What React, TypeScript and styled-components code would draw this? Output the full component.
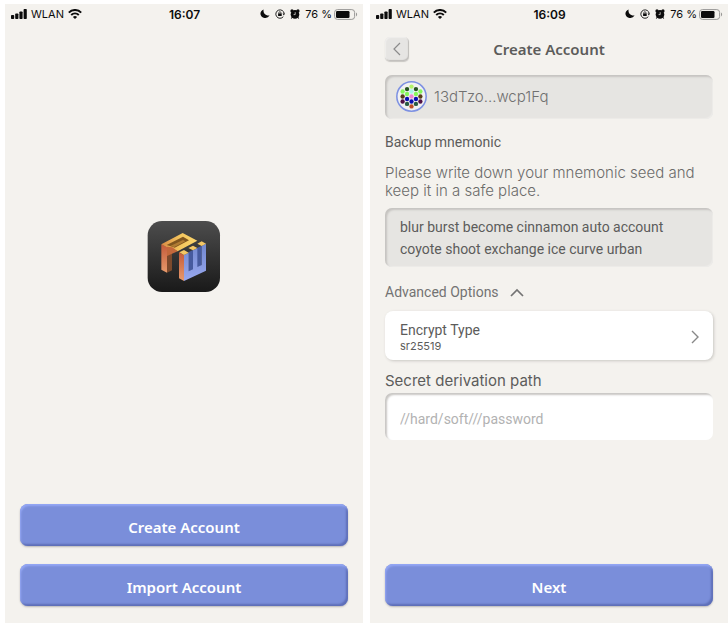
import React from "react";
import styled, { createGlobalStyle } from "styled-components";

const GlobalStyle = createGlobalStyle`
  *, *::before, *::after { box-sizing: border-box; }
  body { margin: 0; background: #fff; color: #5c5c5b; font-family: Roboto, "Noto Sans", sans-serif; }
  button, input { font: inherit; color: inherit; border: 0; margin: 0; }
  h1, h2, p { margin: 0; font-weight: 400; }
  svg { display: block; flex: none; }
`;

const Screens = styled.main`
  display: grid;
  grid-template-columns: 1fr 1fr;
  gap: 7px;
  min-height: 100vh;
  padding: 4px 0 17px 5px;
`;

const Phone = styled.section`
  display: flex;
  flex-direction: column;
  min-width: 0;
  background: #f4f2ee;
`;

const StatusBar = styled.header`
  display: grid;
  grid-template-columns: 1fr auto 1fr;
  align-items: center;
  height: 20px;
  padding: 0 5px 0 6px;
  color: #0c0c0c;
  font-family: Inter, sans-serif;
  font-size: 11px;
`;

const StatusGroup = styled.div<{ $end?: boolean }>`
  display: flex;
  align-items: center;
  justify-content: ${(p) => (p.$end ? "flex-end" : "flex-start")};
  gap: ${(p) => (p.$end ? 5 : 4)}px;
`;

const Charge = styled.span`
  display: flex;
  align-items: center;
  gap: 2px;
`;

const Clock = styled.time`
  font-size: 12px;
  font-weight: 600;
`;

const Splash = styled.div`
  flex: 1;
  display: flex;
  justify-content: center;
  align-items: center;
  padding-bottom: 16px;
`;

const Actions = styled.div`
  display: flex;
  flex-direction: column;
  gap: 18px;
  padding: 0 15px 17px;
`;

const PrimaryButton = styled.button`
  height: 42px;
  padding: 3px 0 0;
  border-radius: 8px;
  background: #7a8eda;
  color: #fff;
  font-family: "Noto Sans", sans-serif;
  font-size: 15px;
  font-weight: 600;
  box-shadow:
    inset 1px 2px 2px #94a7f5,
    inset -2px -2px 2px #5e6fb8,
    0 1px 2px #b9b7b7;
`;

const NavBar = styled.div`
  display: grid;
  grid-template-columns: 24px 1fr 24px;
  align-items: center;
  padding: 13px 15px 14px;
`;

const BackButton = styled.button`
  display: grid;
  place-items: center;
  width: 24px;
  height: 24px;
  padding: 0;
  border-radius: 5px;
  background: #e6e5e3;
  color: #8b8b8b;
  box-shadow: inset 1px 1px 1px #efeeec, inset -1px -1px 1px #bfbdba, 0 1px 1px #c9c7c3;
`;

const Title = styled.h1`
  text-align: center;
  font-family: "Noto Sans", sans-serif;
  font-size: 15px;
  line-height: 20px;
  font-weight: 600;
`;

const Content = styled.div`
  flex: 1;
  display: flex;
  flex-direction: column;
  padding: 0 15px;
`;

const Inset = styled.div`
  border-radius: 7px;
  background: #e6e5e2;
  box-shadow: inset 2px 2px 2px #c6c4c1, inset -1px -1px 1px #edece9;
`;

const Address = styled(Inset)`
  display: flex;
  align-items: center;
  gap: 7px;
  height: 44px;
  padding: 0 11px 1px;
  color: #707070;
  font-family: Inter, sans-serif;
  font-size: 15px;
  font-weight: 300;
`;

const Mnemonic = styled(Inset)`
  padding: 8px 14px 7px 15px;
  font-size: 14px;
  line-height: 22px;
`;

const SectionTitle = styled.h2`
  margin: 13px 0 12px;
  font-size: 14px;
  line-height: 20px;
`;

const Hint = styled.p`
  margin-bottom: 8px;
  color: #6b6b6a;
  font-family: Inter, sans-serif;
  font-size: 15px;
  font-weight: 300;
  line-height: 18px;
`;

const Toggle = styled.button`
  display: flex;
  align-items: center;
  align-self: flex-start;
  gap: 11px;
  margin: 15px 0 9px;
  padding: 0;
  background: none;
  color: #737373;
  font-size: 14px;
  line-height: 20px;
`;

const OptionCard = styled.button`
  display: flex;
  align-items: center;
  justify-content: space-between;
  height: 49px;
  padding: 2px 14px 0 15px;
  border-radius: 8px;
  background: #fff;
  color: #5c5c5b;
  text-align: left;
  box-shadow: 1px 1px 3px #c9c7c3;
`;

const OptionText = styled.span`
  display: flex;
  flex-direction: column;
  font-size: 14px;
  line-height: 18px;
`;

const OptionValue = styled.span`
  font-family: Inter, sans-serif;
  font-size: 11px;
  line-height: 14px;
`;

const FieldLabel = styled.label`
  margin: 11px 0 3px;
  font-family: Inter, sans-serif;
  font-size: 15px;
  line-height: 19px;
`;

const Field = styled.input`
  width: 100%;
  height: 47px;
  padding: 4px 15px 0;
  border-radius: 7px;
  background: #fff;
  font-size: 14px;
  box-shadow: inset 2px 2px 2px #c9c7c4;
  &::placeholder { color: #b2b2b2; opacity: 1; }
`;

function Status({ time }: { time: string }) {
  return (
    <StatusBar>
      <StatusGroup>
        <svg width="16" height="10" viewBox="0 0 16 10" fill="currentColor" aria-hidden="true">
          <rect x="0" y="6" width="3.2" height="4" rx=".8" />
          <rect x="4.2" y="4.5" width="3.2" height="5.5" rx=".8" />
          <rect x="8.4" y="2.5" width="3.2" height="7.5" rx=".8" />
          <rect x="12.6" y="0" width="3.2" height="10" rx=".8" />
        </svg>
        <span>WLAN</span>
        <svg width="14" height="10" viewBox="0 0 14 10" fill="none" stroke="currentColor" strokeWidth="2" aria-hidden="true">
          <path d="M.8 3.6C4.4.1 9.6.1 13.2 3.6" />
          <path d="M3.2 6C5.4 3.9 8.6 3.9 10.8 6" />
          <path d="M7 10 4.9 7.9C6 6.8 8 6.8 9.1 7.9z" fill="currentColor" stroke="none" />
        </svg>
      </StatusGroup>
      <Clock>{time}</Clock>
      <StatusGroup $end>
        <svg width="10" height="10" viewBox="0 0 10 10" fill="currentColor" aria-hidden="true">
          <path d="M3.6.5C2.9 4.1 5.6 7 9.6 6.5A5 5 0 0 1 .4 5C.4 2.9 1.6 1.2 3.6.5z" />
        </svg>
        <svg width="10" height="10" viewBox="0 0 10 10" fill="none" stroke="currentColor" aria-hidden="true">
          <path d="M8.3 7.7A4.2 4.2 0 1 1 9.2 4.6" strokeWidth=".9" />
          <path d="M7.6 4.6h2.4L8.8 6.4z" fill="currentColor" stroke="none" />
          <rect x="3.1" y="4.4" width="3.6" height="2.6" fill="currentColor" stroke="none" />
          <path d="M3.9 4.6V3.7a1 1 0 0 1 2 0v.9" strokeWidth=".7" />
        </svg>
        <svg width="10" height="10" viewBox="0 0 10 10" fill="currentColor" aria-hidden="true">
          <circle cx="5" cy="5.4" r="4.3" />
          <circle cx="2" cy="1.9" r="1.6" />
          <circle cx="8" cy="1.9" r="1.6" />
          <path d="m2.2 8-.8 1.6M7.8 8l.8 1.6" stroke="currentColor" />
          <path d="M5.2 3.2v2.4H3.6" fill="none" stroke="#f4f2ee" strokeWidth=".7" />
        </svg>
        <Charge>
          <span>76 %</span>
          <svg width="24" height="11" viewBox="0 0 24 11" aria-hidden="true">
            <rect x=".6" y=".6" width="20" height="9.8" rx="2.8" fill="none" stroke="#989795" />
            <rect x="2" y="2" width="13.5" height="7" rx="1.2" fill="currentColor" />
            <path d="M22 3.6c1.5.4 1.5 3.4 0 3.8z" fill="#989795" />
          </svg>
        </Charge>
      </StatusGroup>
    </StatusBar>
  );
}

function Logo() {
  return (
    <svg width="74" height="73" viewBox="22 27 222 219" role="img" aria-label="Wallet logo">
      <defs>
        <linearGradient id="tile" x1="0" y1="0" x2="0" y2="1">
          <stop offset="0" stopColor="#4d4d4d" />
          <stop offset="1" stopColor="#191919" />
        </linearGradient>
        <linearGradient id="leg" x1="0" y1="0" x2="0" y2="1">
          <stop offset="0" stopColor="#c55b3a" />
          <stop offset="1" stopColor="#e79a6c" />
        </linearGradient>
        <linearGradient id="top" x1="0" y1="0" x2="1" y2="0">
          <stop offset="0" stopColor="#d98a44" />
          <stop offset="0.5" stopColor="#f3c45d" />
          <stop offset="1" stopColor="#fbd66c" />
        </linearGradient>
        <linearGradient id="front" x1="0" y1="0" x2="0" y2="1">
          <stop offset="0" stopColor="#7187cf" />
          <stop offset="1" stopColor="#98a8ee" />
        </linearGradient>
      </defs>
      <rect x="24" y="30" width="217" height="213" rx="43" fill="url(#tile)" />
      <path d="M82 122 97 116V178L82 185z" fill="#7d4a2c" />
      <path d="M65 100 82 108V185L65 176z" fill="url(#leg)" />
      <path d="M65 100 129 66 173 89 114 121 95 112 82 109z" fill="url(#top)" />
      <path d="M81 102 130 77 148 88 105 110 98 107z" fill="#80561f" />
      <path d="M92 105 130 87 137 91 104 108z" fill="#b07c33" />
      <path d="M82 107 98 109 114 121 82 135z" fill="#c4683c" />
      <path d="M146 124 160 117V176L146 182zM172 111 186 104V163L172 170z" fill="#465a9e" />
      <path d="M118 124 133 132V210L118 202z" fill="url(#leg)" />
      <path d="M133 132 147 125V181L160 175V118L173 112V168L186 162V105L199 98V179L133 210z" fill="url(#front)" />
      <path d="m119 124 14-7 14 8-14 7zM146 111l14-7 13 7-13 7zM173 98l13-7 13 7-13 7z" fill="#f4c765" />
    </svg>
  );
}

const DOTS: [number, number, string][] = [
  [15, 5.4, "#b2f36a"],
  [10.7, 7.8, "#285522"], [19.3, 7.8, "#285522"],
  [6.4, 10.2, "#86f75b"], [15, 10.2, "#a8f6e8"], [23.6, 10.2, "#86f75b"],
  [10.7, 12.6, "#86f75b"], [19.3, 12.6, "#86f75b"],
  [6.4, 15, "#573d17"], [15, 15, "#ee85d4"], [23.6, 15, "#573d17"],
  [10.7, 17.4, "#0b10b0"], [19.3, 17.4, "#0b10b0"],
  [6.4, 19.8, "#501044"], [15, 19.8, "#0b10b0"], [23.6, 19.8, "#501044"],
  [10.7, 22.2, "#285b42"], [19.3, 22.2, "#285b42"],
  [15, 24.6, "#bc4c25"],
];

function Identicon() {
  return (
    <svg width="31" height="31" viewBox="0 0 30 30" aria-hidden="true">
      <circle cx="15" cy="15" r="14.2" fill="#f1f1f2" stroke="#7d91e2" strokeWidth="1.5" />
      {DOTS.map(([x, y, color]) => (
        <circle key={`${x}-${y}`} cx={x} cy={y} r="2.1" fill={color} />
      ))}
    </svg>
  );
}

function WelcomeScreen() {
  return (
    <Phone>
      <Status time="16:07" />
      <Splash>
        <Logo />
      </Splash>
      <Actions>
        <PrimaryButton type="button">Create Account</PrimaryButton>
        <PrimaryButton type="button">Import Account</PrimaryButton>
      </Actions>
    </Phone>
  );
}

function CreateAccountScreen() {
  return (
    <Phone>
      <Status time="16:09" />
      <NavBar>
        <BackButton type="button" aria-label="Back">
          <svg width="8" height="14" viewBox="0 0 8 14" fill="none" stroke="currentColor" strokeWidth="1.2">
            <path d="M7 1 1 7l6 6" />
          </svg>
        </BackButton>
        <Title>Create Account</Title>
      </NavBar>
      <Content>
        <Address>
          <Identicon />
          <span>13dTzo...wcp1Fq</span>
        </Address>
        <SectionTitle>Backup mnemonic</SectionTitle>
        <Hint>Please write down your mnemonic seed and keep it in a safe place.</Hint>
        <Mnemonic>blur burst become cinnamon auto account coyote shoot exchange ice curve urban</Mnemonic>
        <Toggle type="button" aria-expanded="true">
          Advanced Options
          <svg width="14" height="9" viewBox="0 0 14 9" fill="none" stroke="currentColor" strokeWidth="1.7">
            <path d="m1 8 6-6 6 6" />
          </svg>
        </Toggle>
        <OptionCard type="button">
          <OptionText>
            Encrypt Type
            <OptionValue>sr25519</OptionValue>
          </OptionText>
          <svg width="8" height="14" viewBox="0 0 8 14" fill="none" stroke="#888" strokeWidth="1.4">
            <path d="m1 1 6 6-6 6" />
          </svg>
        </OptionCard>
        <FieldLabel htmlFor="derivation">Secret derivation path</FieldLabel>
        <Field id="derivation" type="text" placeholder="//hard/soft///password" />
      </Content>
      <Actions>
        <PrimaryButton type="button">Next</PrimaryButton>
      </Actions>
    </Phone>
  );
}

export default function App() {
  return (
    <>
      <GlobalStyle />
      <Screens>
        <WelcomeScreen />
        <CreateAccountScreen />
      </Screens>
    </>
  );
}
